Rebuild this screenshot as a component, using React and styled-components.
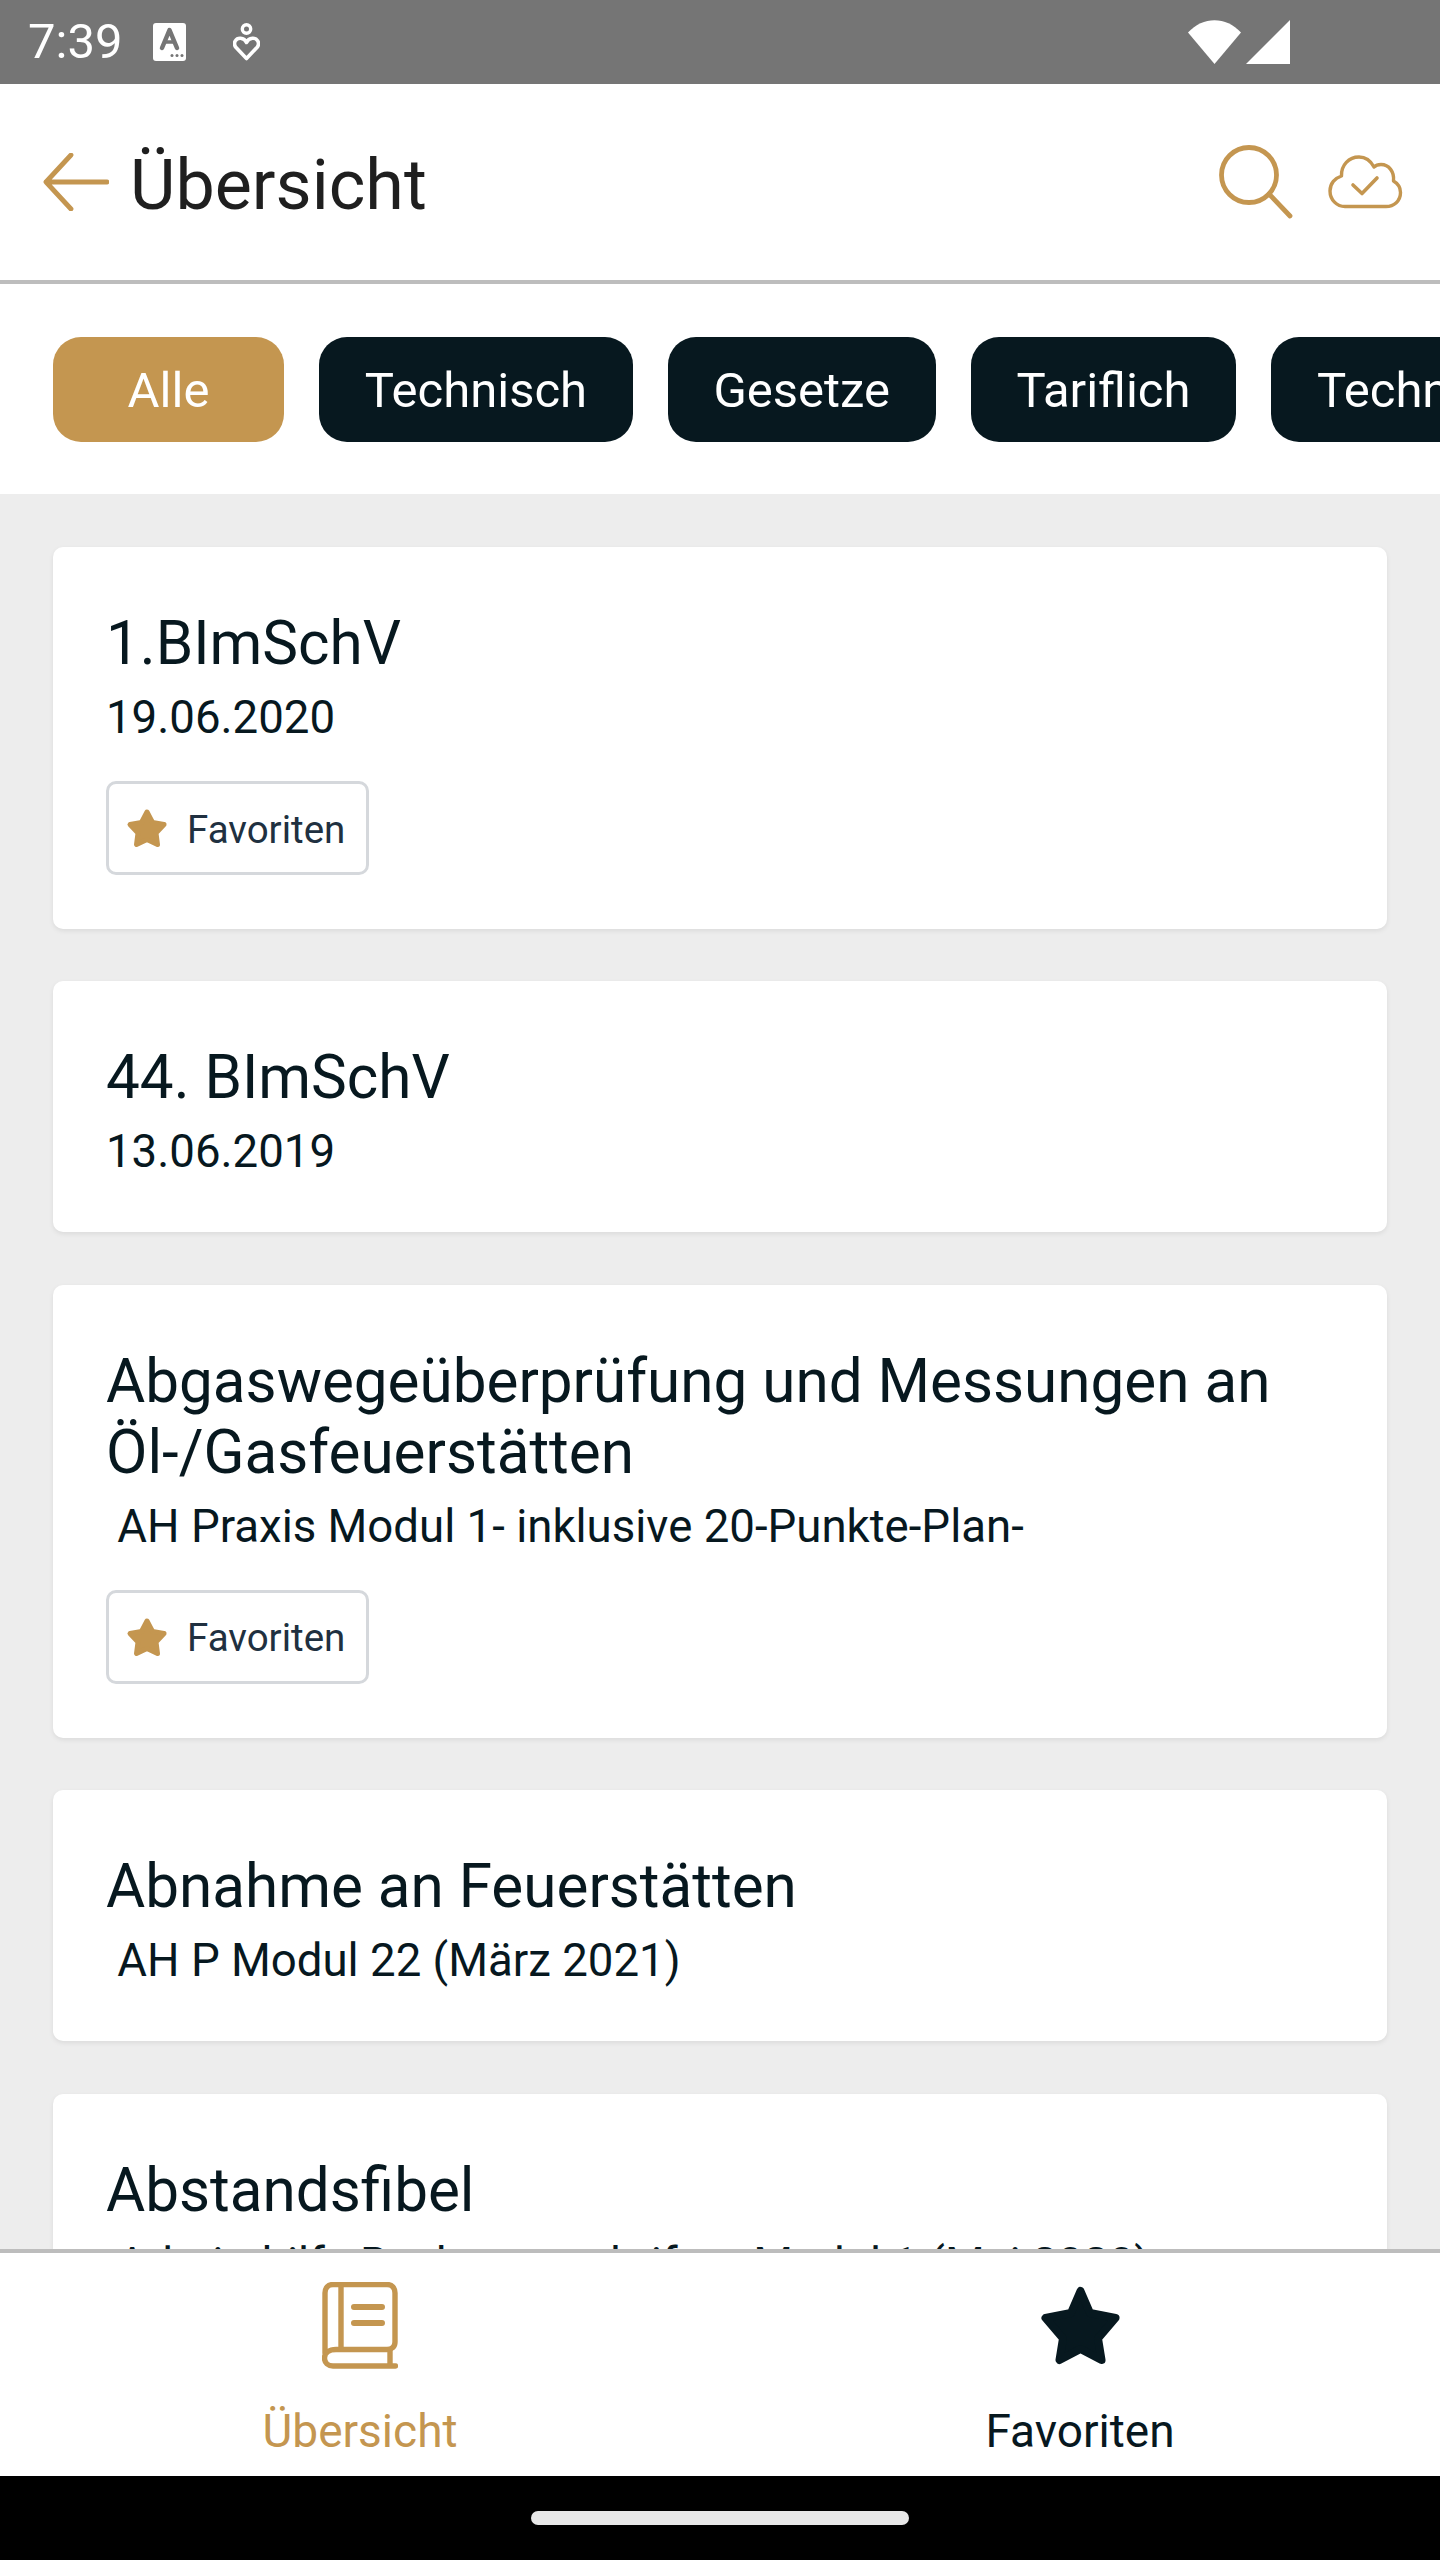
import React from 'react'
import styled, { createGlobalStyle } from 'styled-components'

const gold = '#c49650'
const dark = '#07181f'

const GlobalStyle = createGlobalStyle`
  html, body {
    margin: 0;
    padding: 0;
    background: #fff;
    font-family: Roboto, "Liberation Sans", sans-serif;
  }
`

const chips = ['Alle', 'Technisch', 'Gesetze', 'Tariflich', 'Technik']

const cards = [
  { title: '1.BImSchV', sub: '19.06.2020', fav: true },
  { title: '44. BImSchV', sub: '13.06.2019' },
  {
    title: 'Abgaswegeüberprüfung und Messungen an Öl-/Gasfeuerstätten',
    sub: '\u00a0AH Praxis Modul 1- inklusive 20-Punkte-Plan-',
    fav: true,
  },
  { title: 'Abnahme an Feuerstätten', sub: '\u00a0AH P Modul 22 (März 2021)' },
  { title: 'Abstandsfibel', sub: '\u00a0Arbeitshilfe Rechtsvorschriften Modul 1 (Mai 2020)' },
]

function App() {
  return (
    <Page>
      <GlobalStyle />
      <StatusBar>
        <StatusLeft>
          <Time>7:39</Time>
          <svg width="33" height="38" viewBox="0 0 33 38">
            <rect width="33" height="38" rx="3" fill="#fff" />
            <path d="M9 25 L16.5 7 L24 25" fill="none" stroke="#757575" strokeWidth="4.5" strokeLinecap="round" strokeLinejoin="round" />
            <path d="M11.5 19 H21.5" stroke="#757575" strokeWidth="3.5" />
            <circle cx="19" cy="32.5" r="1.5" fill="#757575" />
            <circle cx="24" cy="32.5" r="1.5" fill="#757575" />
            <circle cx="29" cy="32.5" r="1.5" fill="#757575" />
          </svg>
          <HeartIcon width="27" height="38" viewBox="0 0 27 38">
            <circle cx="13.5" cy="6" r="4.2" fill="none" stroke="#fff" strokeWidth="3.4" />
            <path d="M13.5 35.5 L2.6 24 C-0.2 19.500 3 15 7.500 15.300 C10 15.500 12.500 17 13.500 19.500 C14.500 17 17 15.500 19.500 15.300 C24 15 27.200 19.500 24.400 24 Z" fill="none" stroke="#fff" strokeWidth="3.6" strokeLinejoin="round" />
          </HeartIcon>
        </StatusLeft>
        <StatusRight>
          <svg width="53" height="44" viewBox="0 0 53 44">
            <path d="M0 12.5 C15 -4 38 -4 53 12.5 L26.5 44 Z" fill="#fff" />
          </svg>
          <svg width="44" height="44" viewBox="0 0 44 44">
            <path d="M44 0 V44 H0 Z" fill="#fff" />
          </svg>
        </StatusRight>
      </StatusBar>

      <Header>
        <BackIcon width="66" height="58" viewBox="0 0 66 58">
          <path d="M64 29 H3 M28 2 L3 29 M3 29 L28 56" fill="none" stroke={gold} strokeWidth="4.8" strokeLinecap="round" strokeLinejoin="round" />
        </BackIcon>
        <HeaderTitle>Übersicht</HeaderTitle>
        <HeaderActions>
          <svg width="74" height="74" viewBox="0 0 74 74">
            <circle cx="30" cy="30" r="27.5" fill="none" stroke={gold} strokeWidth="4.8" />
            <path d="M50 49 L71 71" stroke={gold} strokeWidth="4.8" strokeLinecap="round" />
          </svg>
          <svg width="75" height="54" viewBox="0 0 75 54">
            <path d="M17 51.5 H58 C66 51.5 72.5 46 72.5 37.5 C72.5 32 69 28 65.5 26 C66.5 17 61 9.5 53 9.5 C50 9.5 47.5 10.5 46 12 C42.5 5.5 37 2 31 2 C21 2 13 10 13.5 21 C7 23 2 28.5 2 36 C2 45 9 51.5 17 51.5 Z" fill="none" stroke={gold} strokeWidth="3.4" strokeLinejoin="round" />
            <path d="M25 30 L34 38.5 L49 23" fill="none" stroke={gold} strokeWidth="3.6" strokeLinecap="round" strokeLinejoin="round" />
          </svg>
        </HeaderActions>
      </Header>

      <ChipRow>
        {chips.map((c, i) => (
          <Chip key={c} $active={i === 0}>{c}</Chip>
        ))}
      </ChipRow>

      <List>
        {cards.map((card) => (
          <Card key={card.title}>
            <CardTitle>{card.title}</CardTitle>
            <CardSub>{card.sub}</CardSub>
            {card.fav && (
              <FavTag>
                <svg width="42" height="40" viewBox="0 0 42 40">
                  <path d="M21 4 L26.5 14.5 L38 16.5 L30 25 L31.5 36.5 L21 31.5 L10.5 36.5 L12 25 L4 16.5 L15.5 14.5 Z" fill={gold} stroke={gold} strokeWidth="5" strokeLinejoin="round" />
                </svg>
                <FavText>Favoriten</FavText>
              </FavTag>
            )}
          </Card>
        ))}
      </List>

      <BottomNav>
        <NavItem>
          <NavIconBox>
            <svg width="76" height="87" viewBox="0 0 76 87">
              <path d="M3 71 V11 C3 6 6 2.500 11 2.500 H65 C70 2.500 73 6 73 11 V60 C73 65 70 67.500 65 67.500 H14 C7 67.500 2.500 71 2.500 76 C2.500 81 6 84 11 84 H73.500" fill="none" stroke={gold} strokeWidth="5.400" strokeLinecap="round" strokeLinejoin="round" />
              <path d="M19 3 V67 M68 68 V84" stroke={gold} strokeWidth="5.400" />
              <path d="M32 25 H60 M32 41 H60" stroke={gold} strokeWidth="6" strokeLinecap="round" />
            </svg>
          </NavIconBox>
          <NavLabel>Übersicht</NavLabel>
        </NavItem>
        <NavItem>
          <NavIconBox>
            <svg width="81" height="79" viewBox="0 0 81 79">
              <path d="M40.500 5 L50 27 L75.500 32 L58 52.500 L61.500 74 L40.500 63 L19.500 74 L23 52.500 L5.500 32 L31 27 Z" fill={dark} stroke={dark} strokeWidth="8" strokeLinejoin="round" />
            </svg>
          </NavIconBox>
          <NavLabel $dark>Favoriten</NavLabel>
        </NavItem>
      </BottomNav>

      <HomeBar>
        <HomePill />
      </HomeBar>
    </Page>
  )
}

export default App

const Page = styled.div`
  height: 100vh;
  display: flex;
  flex-direction: column;
  overflow: hidden;
`
const StatusBar = styled.div`
  height: 84px;
  flex-shrink: 0;
  background: #757575;
  display: flex;
  align-items: center;
  justify-content: space-between;
  padding: 0 150px 0 28px;
`
const StatusLeft = styled.div`
  display: flex;
  align-items: center;
  gap: 31px;
`
const HeartIcon = styled.svg`
  margin-left: 16px;
`
const Time = styled.span`
  color: #fff;
  font-size: 49px;
  line-height: 84px;
`
const StatusRight = styled.div`
  display: flex;
  align-items: center;
  gap: 5px;
`
const Header = styled.header`
  height: 196px;
  flex-shrink: 0;
  box-sizing: content-box;
  border-bottom: 4px solid #bdbdbd;
  display: flex;
  align-items: center;
  padding: 0 37px 0 43px;
`
const BackIcon = styled.svg`
  margin-right: 21px;
`
const HeaderTitle = styled.h1`
  margin: 0;
  padding-top: 6px;
  flex: 1;
  font-size: 70px;
  font-weight: 400;
  color: #1f1f1f;
`
const HeaderActions = styled.div`
  display: flex;
  align-items: center;
  gap: 35px;
`
const ChipRow = styled.div`
  height: 210px;
  flex-shrink: 0;
  display: flex;
  align-items: center;
  gap: 35px;
  padding-left: 53px;
  overflow: hidden;
`
const Chip = styled.div`
  flex-shrink: 0;
  min-width: 231px;
  height: 105px;
  box-sizing: border-box;
  padding: 2px 45.7px 0;
  display: flex;
  align-items: center;
  justify-content: center;
  border-radius: 28px;
  font-size: 49px;
  color: #fff;
  background: ${(p) => (p.$active ? gold : dark)};
`
const List = styled.main`
  flex: 1;
  min-height: 0;
  overflow: hidden;
  background: #ededed;
  padding: 53px 53px 0;
  display: flex;
  flex-direction: column;
  gap: 52.4px;
`
const Card = styled.article`
  flex-shrink: 0;
  background: #fff;
  border-radius: 10px;
  padding: 61px 53px 48px;
  box-shadow: 0 2px 5px rgba(0, 0, 0, 0.08);
`
const CardTitle = styled.div`
  font-size: 60.2px;
  line-height: 71px;
  color: ${dark};
`
const CardSub = styled.div`
  margin-top: 6px;
  font-size: 45.6px;
  line-height: 65px;
  color: ${dark};
`
const FavTag = styled.div`
  display: flex;
  align-items: center;
  height: 94px;
  width: 263px;
  box-sizing: border-box;
  margin: 31px 0 6px;
  padding-left: 17px;
  gap: 19px;
  border: 3.5px solid #d5d8dc;
  border-radius: 10px;
`
const FavText = styled.span`
  padding-top: 2px;
  font-size: 38.5px;
  color: #203040;
`
const BottomNav = styled.nav`
  height: 223px;
  flex-shrink: 0;
  display: flex;
  background: #fff;
  border-top: 4px solid #bdbdbd;
`
const NavItem = styled.div`
  flex: 1;
  display: flex;
  flex-direction: column;
  align-items: center;
  padding-top: 29px;
`
const NavIconBox = styled.div`
  height: 87px;
  display: flex;
  align-items: center;
  justify-content: center;
`
const NavLabel = styled.span`
  margin-top: 35px;
  font-size: 46px;
  line-height: 54px;
  color: ${(p) => (p.$dark ? dark : gold)};
`
const HomeBar = styled.div`
  height: 84px;
  flex-shrink: 0;
  background: #000;
  display: flex;
  align-items: center;
  justify-content: center;
`
const HomePill = styled.div`
  width: 378px;
  height: 14px;
  border-radius: 7px;
  background: #e8e8e8;
`
